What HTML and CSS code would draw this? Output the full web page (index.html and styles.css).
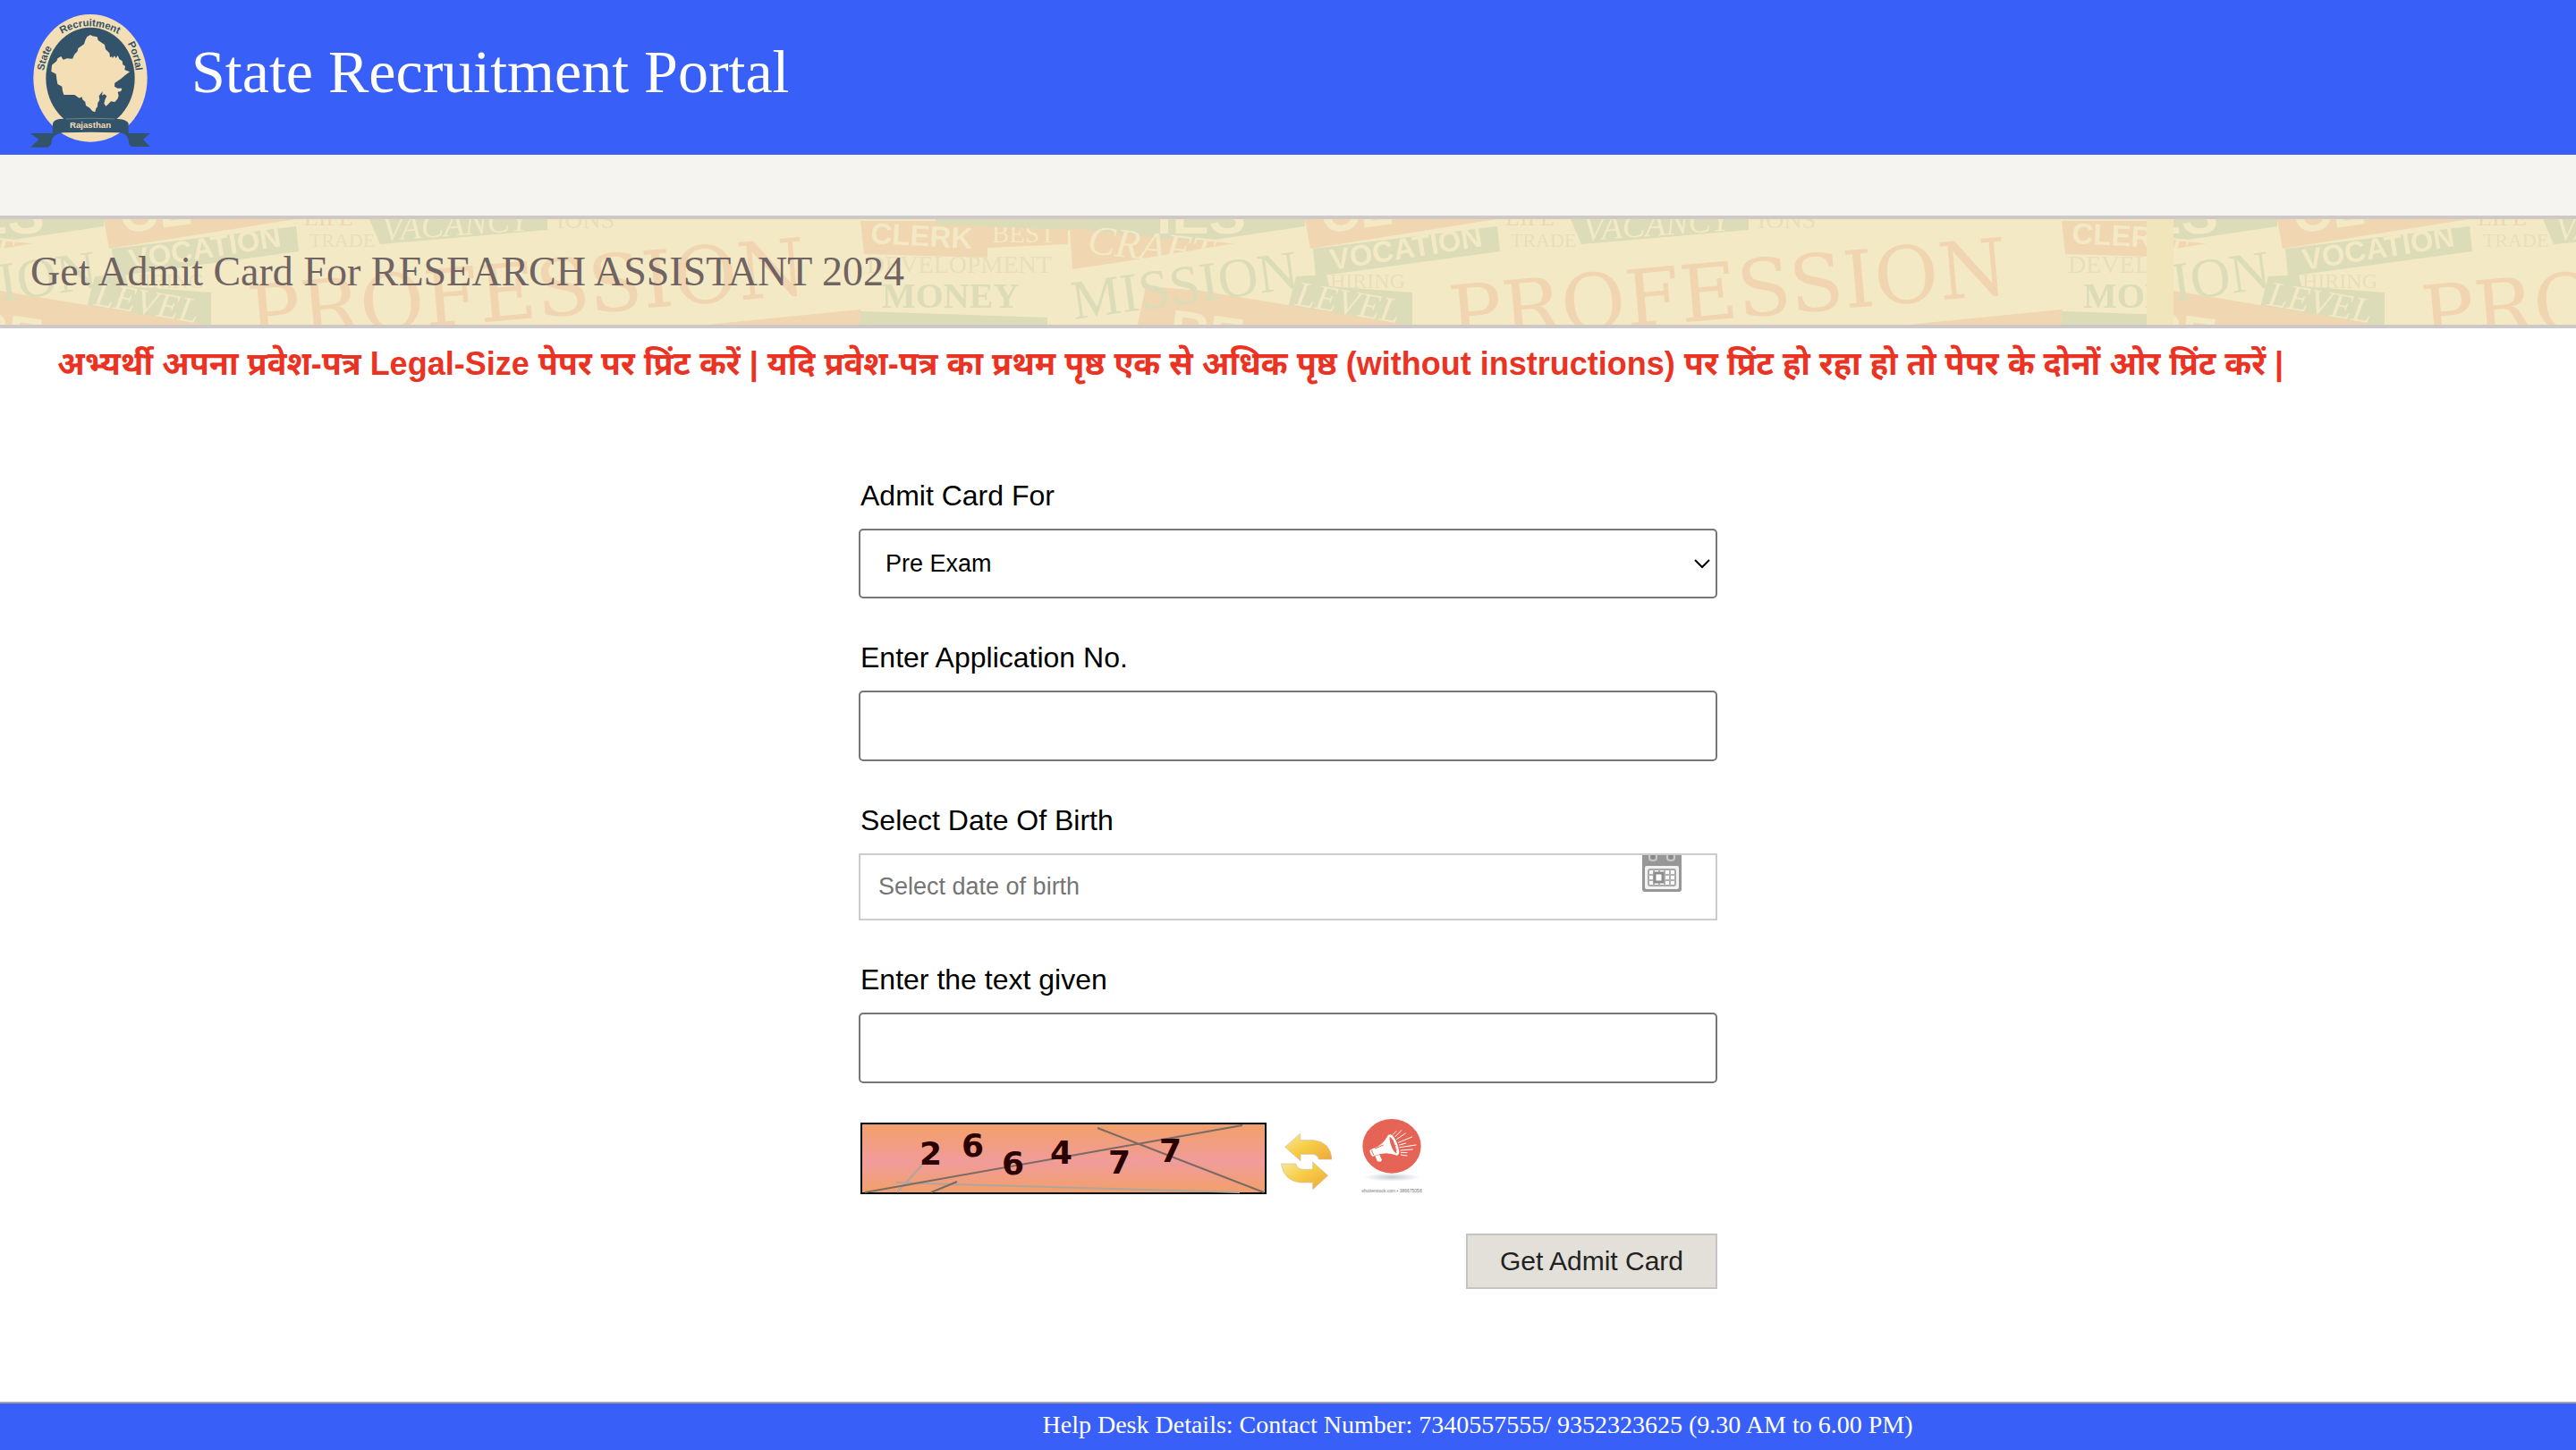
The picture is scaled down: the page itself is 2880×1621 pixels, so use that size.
FILE: index.html
```html
<!DOCTYPE html>
<html lang="en">
<head>
    <meta charset="UTF-8">
    <meta name="viewport" content="width=device-width, initial-scale=1.0">
    <title>State Recruitment Portal</title>
    <link rel="stylesheet" href="styles.css">
</head>
<body>
    <!-- Header -->
    <header class="header">
        <svg class="logo" viewBox="0 0 480 519" role="img" aria-label="State Recruitment Portal Rajasthan">
            <defs>
                <path id="arc-state" d="M87 238 Q93 196 117 155"/>
                <path id="arc-recruitment" d="M147 114 Q243 58 350 122"/>
                <path id="arc-portal" d="M368 146 Q392 190 397 256"/>
            </defs>
            <ellipse cx="243" cy="262" rx="191" ry="214" fill="#f4deb6"/>
            <ellipse cx="243" cy="262" rx="149" ry="170" fill="#33536b"/>
            <path fill="#f4deb6" d="M243 117L250 121L266 124L269 135L291 150L294 165L307 178L309 192L316 190L318 195L324 187L329 195L335 186L340 198L350 205L352 217L360 222L358 234L375 241L360 252L345 265L325 278L324 290L334 296L349 296L346 306L335 308L338 322L334 332L325 342L312 340L302 350L295 356L289 347L293 332L298 322L290 316L282 320L284 306L275 318L272 322L274 335L268 345L267 358L262 364L259 376L250 373L241 362L228 354L226 342L217 334L214 325L206 329L190 318L154 318L150 305L148 290L133 282L130 265L128 248L112 240L114 218L130 205L133 196L145 189L152 200L165 196L183 197L190 182L200 172L202 162L222 148L226 135L232 123Z"/>
            <path fill="#33536b" d="M116 447L117 415Q120 402 140 399Q243 392 345 400Q368 404 371 415V447H443L420 468L443 492H385Q372 490 371 470Q366 447 340 445Q243 441 150 445Q118 450 114 470Q112 492 98 494H42L70 468L42 447Z"/>
            <path fill="none" stroke="#8c9a9b" stroke-width="2" d="M162 399Q243 394 325 399"/>
            <g class="logo-text">
                <text><textPath href="#arc-state">State</textPath></text>
                <text><textPath href="#arc-recruitment">Recruitment</textPath></text>
                <text><textPath href="#arc-portal">Portal</textPath></text>
                <text class="logo-ribbon" x="243" y="429">Rajasthan</text>
            </g>
        </svg>
        <h1>State Recruitment Portal</h1>
    </header>

    <div class="nav-strip"></div>

    <!-- Page heading -->
    <div class="banner">
        <svg class="banner-bg" aria-hidden="true">
            <defs>
                <clipPath id="tile-clip"><rect width="2400" height="118"/></clipPath>
                <g id="words">
                    <path class="green" d="M-297 0H116V8L-60 34L-147 12L-297 6Z"/>
                    <path class="orange" d="M-147 10L-8 25L0 24L45 28L-144 56Z"/>
                    <path class="cream" d="M-144 57L110 15L155 118H-144Z"/>
                    <path class="green" d="M125 33L331 8L334 36L128 64Z"/>
                    <path class="green" d="M106 64L140 62L143 75L236 82V118H92Z"/>
                    <path class="orange" d="M-62 75L0 80L229 118H-71Z"/>
                    <path class="orange" d="M116 0H330L122 33Z"/>
                    <path class="green" d="M413 0H612V12L425 28Z"/>
                    <path class="orange" d="M790 118L962 101L966 118Z"/>
                    <path class="green" d="M962 103L1171 110V118H962Z"/>
                    <path class="orange" d="M962 2L1194 2V28L1104 32V43L966 39Z"/>
                    <g class="sans cream">
                        <text x="-50" y="16" font-size="62">IES</text>
                        <text font-size="60" transform="translate(136 16) rotate(-8)">CL</text>
                        <text font-size="33" transform="translate(146 57) rotate(-9)">VOCATION</text>
                        <text font-size="33" transform="translate(973 27) rotate(3)">CLERK</text>
                        <text font-size="60" transform="translate(-38 142) rotate(8)">RE</text>
                    </g>
                    <g class="serif cream">
                        <text x="1109" y="26" font-size="29">BEST</text>
                        <g font-style="italic">
                            <text font-size="46" transform="translate(-128 38) rotate(6)">CRAFT</text>
                            <text font-size="38" transform="translate(428 24) rotate(-4)">VACANCY</text>
                            <text font-size="40" transform="translate(104 96) rotate(10)">LEVEL</text>
                        </g>
                    </g>
                    <g class="serif tint">
                        <text x="144" y="77" font-size="24">HIRING</text>
                        <text x="346" y="31" font-size="22">TRADE</text>
                        <text x="622" y="10" font-size="28">IONS</text>
                        <text x="969" y="60" font-size="28">DEVELOPMENT</text>
                    </g>
                    <g class="serif green">
                        <text font-size="62" transform="translate(-142 112) rotate(-8)">MISSION</text>
                        <text x="986" y="99" font-size="40" font-weight="bold">MONEY</text>
                    </g>
                    <text class="serif orange" x="340" y="7" font-size="26">LIFE</text>
                    <text class="profession" transform="translate(280 138) rotate(-5)">PROFESSION</text>
                </g>
                <pattern id="banner-tile" width="2430" height="118" patternUnits="userSpaceOnUse">
                    <g clip-path="url(#tile-clip)">
                        <rect class="cream" width="2400" height="118"/>
                        <use href="#words"/>
                        <use href="#words" x="1343"/>
                    </g>
                </pattern>
            </defs>
            <rect width="100%" height="100%" fill="url(#banner-tile)"/>
        </svg>
        <h2>Get Admit Card For RESEARCH ASSISTANT 2024</h2>
    </div>

    <!-- Admit card form -->
    <main>
        <p class="notice" lang="hi">अभ्यर्थी अपना प्रवेश-पत्र Legal-Size पेपर पर प्रिंट करें | यदि प्रवेश-पत्र का प्रथम पृष्ठ एक से अधिक पृष्ठ (without instructions) पर प्रिंट हो रहा हो तो पेपर के दोनों ओर प्रिंट करें |</p>

        <form class="admit-form">
            <label for="admit-for">Admit Card For</label>
            <div class="field">
                <select id="admit-for">
                    <option>Pre Exam</option>
                </select>
                <svg class="select-arrow" viewBox="0 0 18 11"><path d="M1 1L9 9L17 1"/></svg>
            </div>

            <label for="application-no">Enter Application No.</label>
            <div class="field">
                <input type="text" id="application-no">
            </div>

            <label for="dob">Select Date Of Birth</label>
            <div class="field">
                <input type="text" id="dob" class="date-input" placeholder="Select date of birth">
                <button type="button" class="calendar-btn" aria-label="Open calendar">
                    <svg viewBox="0 0 44 41">
                        <path fill="#979797" d="M0 0H44V38Q44 41 41 41H3Q0 41 0 38Z"/>
                        <path fill="none" stroke="#c9c9c9" stroke-width="2" d="M8 0V3Q8 6 12 6T16 3V0M28 0V3Q28 6 32 6T36 3V0"/>
                        <path fill="#8a8a8a" d="M10 0H14V4H10ZM30 0H34V4H30Z"/>
                        <rect x="3" y="12" width="38" height="26" rx="2" fill="#f2f2f2"/>
                        <rect x="7" y="16" width="30" height="18" rx="2" fill="#fafafa" stroke="#a8a8a8" stroke-width="2"/>
                        <path fill="none" stroke="#b2b2b2" stroke-width="2" d="M7 22H37M7 28H37M13 16V34M19 16V34M25 16V34M31 16V34"/>
                        <rect x="14" y="20" width="9" height="10" fill="#fff" stroke="#8d8d8d" stroke-width="3"/>
                    </svg>
                </button>
            </div>

            <label for="captcha">Enter the text given</label>
            <div class="field">
                <input type="text" id="captcha">
            </div>

            <div class="captcha-row">
                <svg class="captcha-img" viewBox="0 0 454 80" role="img" aria-label="Captcha">
                    <defs>
                        <linearGradient id="captcha-fill" x1="0" y1="0" x2="0" y2="1">
                            <stop offset="0.08" stop-color="#f29f6f"/>
                            <stop offset="0.55" stop-color="#f09c9a"/>
                            <stop offset="0.95" stop-color="#f29f6f"/>
                        </linearGradient>
                    </defs>
                    <rect x="1" y="1" width="452" height="78" fill="url(#captcha-fill)" stroke="#000" stroke-width="2"/>
                    <path fill="none" stroke="#b0a59d" stroke-width="2" d="M40 67L424 78M70 46L41 78"/>
                    <path fill="none" stroke="#7a6a63" stroke-width="2" d="M5 78L427 3M265 6L451 78M108 66L79 78"/>
                    <g class="captcha-digits">
                        <text x="66" y="47">2</text>
                        <text x="113" y="38">6</text>
                        <text x="158" y="58">6</text>
                        <text x="212" y="46">4</text>
                        <text x="277" y="57">7</text>
                        <text x="334" y="44">7</text>
                    </g>
                </svg>
                <button type="button" class="icon-btn" aria-label="Refresh captcha">
                    <svg class="refresh-icon" viewBox="95 108 174 207">
                        <defs>
                            <linearGradient id="gold" x1="0" y1="0" x2="1" y2="1">
                                <stop offset="0" stop-color="#fbe9a0"/>
                                <stop offset="0.45" stop-color="#f6cd45"/>
                                <stop offset="1" stop-color="#efa63c"/>
                            </linearGradient>
                        </defs>
                        <g fill="url(#gold)" stroke="#c9bfa6" stroke-width="2">
                            <path d="M109 157L160 112V134H205Q262 140 266 198H222Q218 182 200 181H161V203Z"/>
                            <path d="M96 213H145Q150 230 168 232H202V207L253 253L202 299V276H160Q105 270 96 213Z"/>
                        </g>
                    </svg>
                </button>
                <button type="button" class="icon-btn audio-btn" aria-label="Play captcha audio">
                    <svg class="audio-icon" viewBox="366 63 204 252">
                        <defs>
                            <radialGradient id="shadow">
                                <stop offset="0" stop-color="#c3cad3"/>
                                <stop offset="1" stop-color="#fff"/>
                            </radialGradient>
                        </defs>
                        <ellipse cx="468" cy="258" rx="96" ry="14" fill="url(#shadow)"/>
                        <ellipse cx="468" cy="154" rx="98" ry="91" fill="#e56456"/>
                        <path fill="#fff" d="M394 168L403 163Q438 152 455 118Q461 111 470 118Q486 134 493 172Q493 184 485 185Q448 170 413 185L404 189Q395 182 394 168ZM412 187L427 183L435 200L431 206L420 205Z"/>
                        <path fill="#e56456" d="M461 122Q471 127 478 148Q485 168 484 179Q473 172 466 152Q459 132 461 122Z"/>
                        <path fill="none" stroke="#e56456" stroke-width="3" d="M401 167Q402 176 408 184M411 162L440 150M464 140L475 134M470 156L482 151M476 168L485 165"/>
                        <path fill="none" stroke="#fff" stroke-width="3" stroke-linecap="round" d="M472 115L483 104M480 122L500 101M484 131L514 111M490 142L536 123M494 150L515 144M495 158L549 150M498 168L538 165M499 175L519 176M499 183L519 186"/>
                        <text class="audio-credit" x="468" y="309">shutterstock.com • 386675058</text>
                    </svg>
                </button>
            </div>

            <button type="submit" class="submit-btn">Get Admit Card</button>
        </form>
    </main>

    <footer class="footer">Help Desk Details: Contact Number: 7340557555/ 9352323625 (9.30 AM to 6.00 PM)</footer>
</body>
</html>
```

FILE: styles.css
```css
* {
    box-sizing: border-box;
}
body {
    display: flex;
    flex-direction: column;
    min-height: 100vh;
    margin: 0;
    background-color: #fff;
    color: #000;
    font-family: "Liberation Sans", "Noto Sans", "Noto Sans Devanagari", sans-serif;
}
h1, h2, p {
    margin: 0;
    font-weight: normal;
}
.header {
    display: flex;
    align-items: center;
    gap: 34px;
    padding-left: 20px;
    background-color: #3860f8;
}
.header h1 {
    padding-bottom: 12px;
    color: #fff;
    font-family: "Liberation Serif", serif;
    font-size: 68px;
}
.logo {
    width: 160px;
    height: 173px;
}
.logo-text {
    font-size: 34px;
    font-weight: bold;
    fill: #33536b;
}
.logo-ribbon {
    font-size: 29px;
    text-anchor: middle;
    fill: #f4deb6;
}
.nav-strip {
    height: 68px;
    background-color: #f5f4f0;
}
.banner {
    position: relative;
    padding: 32px 34px;
    border-top: 4px solid #cfc8c8;
    border-bottom: 4px solid #cfc8c8;
    background-color: #f1e6bb;
}
.banner h2 {
    position: relative;
    color: #706363;
    font-family: "Liberation Serif", serif;
    font-size: 46px;
    line-height: 54px;
}
.banner-bg {
    position: absolute;
    top: 0;
    left: 0;
    width: 100%;
    height: 100%;
}
.cream {
    fill: #f3e9c5;
}
.green {
    fill: #dcdcb8;
}
.orange {
    fill: #f0d7b2;
}
.tint {
    fill: #e8dfb9;
}
.sans {
    font-family: "Liberation Sans", sans-serif;
    font-weight: bold;
}
.serif {
    font-family: "Liberation Serif", serif;
}
.profession {
    font-family: "DejaVu Serif", serif;
    font-size: 88px;
    fill: #f0d5b0;
}
main {
    flex: 1;
}
.notice {
    padding: 16px 64px 0;
    color: #eb3323;
    font-size: 36px;
    font-weight: bold;
    line-height: 48px;
}
.admit-form {
    display: flex;
    flex-direction: column;
    width: calc(100% / 3);
    margin: 105px auto 48px;
}
label {
    margin: 0 0 19px 2px;
    font-size: 32px;
    line-height: 36px;
}
.field {
    position: relative;
    margin-bottom: 48px;
}
select, input {
    display: block;
    width: 100%;
    height: 79px;
    padding: 0 28px;
    border: 2px solid #767676;
    border-radius: 5px;
    background-color: #fff;
    color: #000;
    font-family: inherit;
    font-size: 27px;
    appearance: none;
}
select {
    height: 78px;
}
.date-input {
    height: 75px;
    padding: 0 20px;
    border-color: #ccc;
    border-radius: 0;
}
.date-input::placeholder {
    color: #757575;
}
.select-arrow {
    position: absolute;
    top: 34px;
    right: 8px;
    width: 18px;
    height: 11px;
    fill: none;
    stroke: #000;
    stroke-width: 2px;
    pointer-events: none;
}
.calendar-btn {
    position: absolute;
    top: 2px;
    right: 40px;
    padding: 0;
    border: none;
    background: none;
    cursor: pointer;
}
.calendar-btn svg {
    display: block;
    width: 44px;
    height: 41px;
}
.captcha-row {
    display: flex;
    align-items: flex-end;
    gap: 16px;
    margin-top: -8px;
    padding-left: 2px;
}
.captcha-img {
    width: 454px;
    height: 80px;
}
.captcha-digits {
    font-family: "DejaVu Sans", sans-serif;
    font-size: 36px;
    font-weight: bold;
    fill: #2b0000;
}
.icon-btn {
    padding: 0;
    border: none;
    background: none;
    cursor: pointer;
}
.icon-btn svg {
    display: block;
}
.refresh-icon {
    width: 58px;
    height: 69px;
}
.audio-btn {
    margin-left: 16px;
}
.audio-icon {
    width: 68px;
    height: 84px;
}
.audio-credit {
    font-size: 15px;
    text-anchor: middle;
    fill: #777;
}
.submit-btn {
    align-self: flex-end;
    margin-top: 44px;
    padding: 12px 36px;
    border: 2px solid #c5c5c5;
    background-color: #e3e0d9;
    color: #222;
    font-family: inherit;
    font-size: 30px;
    line-height: 34px;
    cursor: pointer;
}
.footer {
    padding: 8px 0 12px 424px;
    border-top: 2px solid #aca0a0;
    background-color: #3860f8;
    color: #fff;
    font-family: "Liberation Serif", serif;
    font-size: 28px;
    line-height: 32px;
    text-align: center;
}
```
